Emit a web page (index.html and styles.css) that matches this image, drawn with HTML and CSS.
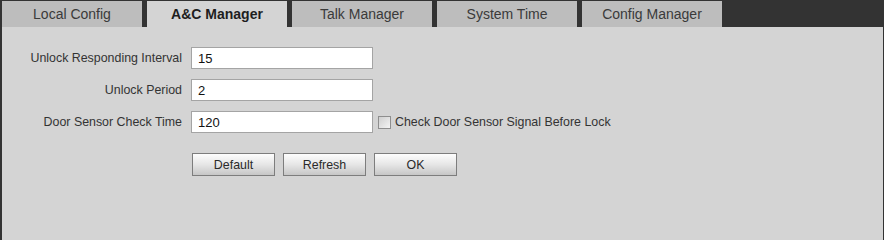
FILE: index.html
```html
<!DOCTYPE html>
<html>
<head>
<meta charset="utf-8">
<link rel="stylesheet" href="styles.css">
</head>
<body>
<div class="page">
  <div class="tabs">
    <div class="tab">Local Config</div>
    <div class="tab active">A&amp;C Manager</div>
    <div class="tab">Talk Manager</div>
    <div class="tab">System Time</div>
    <div class="tab">Config Manager</div>
  </div>
  <div class="content">
    <div class="form">
      <label class="lbl">Unlock Responding Interval</label>
      <div class="field"><input class="txt" type="text" value="15"></div>
      <label class="lbl">Unlock Period</label>
      <div class="field"><input class="txt" type="text" value="2"></div>
      <label class="lbl">Door Sensor Check Time</label>
      <div class="field"><input class="txt" type="text" value="120"><span class="chk"></span><span class="chklbl">Check Door Sensor Signal Before Lock</span></div>
    </div>
    <div class="buttons">
      <button class="btn">Default</button>
      <button class="btn">Refresh</button>
      <button class="btn">OK</button>
    </div>
  </div>
</div>
</body>
</html>
```
FILE: styles.css
```css
html, body {
  margin: 0;
  padding: 0;
  background: #333333;
  font-family: "Liberation Sans", Arial, sans-serif;
}
body {
  min-height: 100vh;
  display: flex;
  flex-direction: column;
}
.page {
  flex: 1;
  display: flex;
  flex-direction: column;
  min-height: 100vh;
  padding-left: 2px;
  padding-right: 1px;
  box-sizing: border-box;
}
.tabs {
  display: flex;
  gap: 5px;
  padding-top: 1px;
  height: 27px;
  box-sizing: border-box;
}
.tab {
  width: 140px;
  height: 26px;
  background: #bdbdbd;
  color: #3a3a3a;
  font-size: 14px;
  display: flex;
  align-items: center;
  justify-content: center;
  padding-bottom: 1px;
  box-sizing: border-box;
}
.tab.active {
  background: #d4d4d4;
  color: #1e1e1e;
  font-weight: bold;
}
.content {
  flex: 1;
  background: #d4d4d4;
  padding-top: 20px;
}
.form {
  display: grid;
  grid-template-columns: 180px auto;
  column-gap: 9px;
  row-gap: 10px;
  align-items: center;
}
.lbl {
  text-align: right;
  font-size: 12.4px;
  color: #333;
}
.field {
  display: flex;
  align-items: center;
}
.txt {
  width: 182px;
  height: 22px;
  box-sizing: border-box;
  border: 1px solid #a4a4a4;
  background: #fff;
  font-family: "Liberation Sans", Arial, sans-serif;
  font-size: 13px;
  color: #111;
  padding: 0 0 0 6px;
  margin: 0;
  outline: none;
}
.chk {
  width: 13px;
  height: 13px;
  box-sizing: border-box;
  border: 1px solid #8e8e8e;
  background: linear-gradient(135deg, #cfcfcf, #f4f4f4);
  margin-left: 5px;
  margin-right: 4px;
  margin-top: 1px;
}
.chklbl {
  font-size: 12.4px;
  color: #333;
}
.buttons {
  display: flex;
  gap: 8px;
  margin-left: 190px;
  margin-top: 20px;
}
.btn {
  width: 83px;
  height: 23px;
  box-sizing: border-box;
  border: 1px solid #7d7d7d;
  background: linear-gradient(#fdfdfd, #e6e6e6 50%, #c6c6c6);
  font-family: "Liberation Sans", Arial, sans-serif;
  font-size: 12.4px;
  color: #2a2a2a;
  padding: 0;
  margin: 0;
}
```
